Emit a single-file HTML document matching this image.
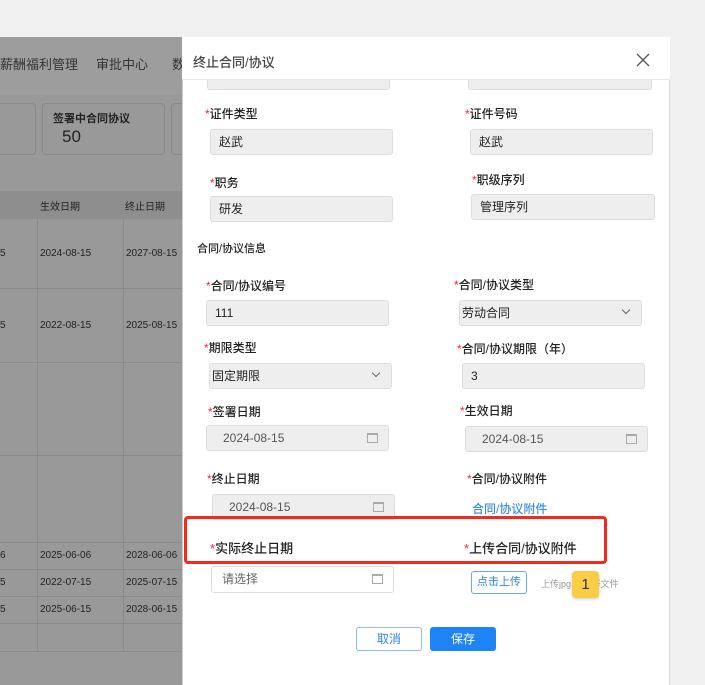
<!DOCTYPE html><html><head><meta charset="utf-8"><style>
*{box-sizing:border-box;margin:0;padding:0}
body{width:705px;height:685px;position:relative;overflow:hidden;background:#f0f0f0;font-family:"Liberation Sans","Noto Sans CJK SC",sans-serif;font-size:12px;color:#333}
.a{position:absolute}
.ov{left:0;top:37px;width:182px;height:648px;background:#999}
.lbl{position:absolute;font-size:12px;color:#222;white-space:nowrap;font-weight:500}
.lbl b{color:#f22;font-weight:normal}
.in{position:absolute;height:26px;width:183px;background:#eee;border:1px solid #ddd;border-radius:3px;padding-left:8px;line-height:24px;font-size:12px;color:#222}
.g{color:#555;padding-left:16px}
.cal{position:absolute;right:10px;top:7px;width:11px;height:10px;border:1px solid #aaa;border-top-width:2px}
.chev{position:absolute;right:12px;top:6px;width:6px;height:6px;border-right:1px solid #666;border-bottom:1px solid #666;transform:rotate(45deg)}
.t{position:absolute;font-size:11px;color:#222}
.hl{position:absolute;height:1px;background:#8a8a8a;left:0;width:182px}
.vl{position:absolute;width:1px;background:#8a8a8a}
</style></head><body>
<div class="a ov"></div>
<div class="a" style="left:0;top:37px;width:182px;height:58px;background:#9d9d9d"></div>
<div class="t" style="left:0;top:54px;font-size:13px;color:#333">薪酬福利管理</div>
<div class="t" style="left:96px;top:54px;font-size:13px;color:#333">审批中心</div>
<div class="t" style="left:172px;top:54px;font-size:13px;color:#333">数</div>
<div class="a" style="left:-10px;top:103px;width:46px;height:52px;border:1px solid #888;border-radius:4px"></div>
<div class="a" style="left:42px;top:103px;width:123px;height:52px;border:1px solid #888;border-radius:4px"></div>
<div class="a" style="left:171px;top:103px;width:20px;height:52px;border:1px solid #888;border-radius:4px"></div>
<div class="t" style="left:53px;top:110px;font-size:11px;font-weight:bold">签署中合同协议</div>
<div class="t" style="left:62px;top:127px;font-size:17px">50</div>
<div class="a" style="left:0;top:191px;width:182px;height:28px;background:#8e8e8e"></div>
<div class="t" style="left:40px;top:198px;font-size:10px">生效日期</div>
<div class="t" style="left:125px;top:198px;font-size:10px">终止日期</div>
<div class="vl" style="left:37px;top:219px;height:432px"></div>
<div class="vl" style="left:123px;top:219px;height:432px"></div>
<div class="hl" style="top:288px"></div><div class="hl" style="top:362px"></div><div class="hl" style="top:455px"></div><div class="hl" style="top:542px"></div><div class="hl" style="top:569px"></div><div class="hl" style="top:596px"></div><div class="hl" style="top:623px"></div><div class="hl" style="top:651px"></div>
<div class="t" style="left:0;top:248px;font-size:10px">5</div><div class="t" style="left:40px;top:248px;font-size:10px">2024-08-15</div><div class="t" style="left:126px;top:248px;font-size:10px">2027-08-15</div>
<div class="t" style="left:0;top:320px;font-size:10px">5</div><div class="t" style="left:40px;top:320px;font-size:10px">2022-08-15</div><div class="t" style="left:126px;top:320px;font-size:10px">2025-08-15</div>
<div class="t" style="left:0;top:550px;font-size:10px">6</div><div class="t" style="left:40px;top:550px;font-size:10px">2025-06-06</div><div class="t" style="left:126px;top:550px;font-size:10px">2028-06-06</div>
<div class="t" style="left:0;top:577px;font-size:10px">5</div><div class="t" style="left:40px;top:577px;font-size:10px">2022-07-15</div><div class="t" style="left:126px;top:577px;font-size:10px">2025-07-15</div>
<div class="t" style="left:0;top:604px;font-size:10px">5</div><div class="t" style="left:40px;top:604px;font-size:10px">2025-06-15</div><div class="t" style="left:126px;top:604px;font-size:10px">2028-06-15</div>

<div class="a" style="left:182px;top:37px;width:488px;height:648px;background:#fff;border-left:1px solid #ccc;border-right:1px solid #ddd"></div>
<div class="in" style="left:207px;top:62px;height:28px"></div>
<div class="in" style="left:468px;top:62px;height:28px;width:184px"></div>
<div class="a" style="left:182px;top:37px;width:488px;height:43px;border-bottom:1px solid #e8e8e8;background:#fff;z-index:2"></div>
<div class="lbl" style="left:193px;top:52px;font-size:13px;color:#444;z-index:3">终止合同/协议</div>
<svg class="a" style="left:636px;top:53px;z-index:3" width="14" height="14" viewBox="0 0 14 14"><path d="M1 1L13 13M13 1L1 13" stroke="#555" stroke-width="1.3"/></svg>

<div class="lbl" style="left:205px;top:105px"><b>*</b>证件类型</div>
<div class="lbl" style="left:465px;top:105px"><b>*</b>证件号码</div>
<div class="in" style="left:210px;top:129px">赵武</div>
<div class="in" style="left:470px;top:129px">赵武</div>
<div class="lbl" style="left:210px;top:174px"><b>*</b>职务</div>
<div class="lbl" style="left:472px;top:171px"><b>*</b>职级序列</div>
<div class="in" style="left:210px;top:196px">研发</div>
<div class="in" style="left:471px;top:194px;width:184px">管理序列</div>
<div class="lbl" style="left:197px;top:240px;font-size:11px">合同/协议信息</div>
<div class="lbl" style="left:206px;top:277px"><b>*</b>合同/协议编号</div>
<div class="lbl" style="left:454px;top:276px"><b>*</b>合同/协议类型</div>
<div class="in" style="left:206px;top:300px">111</div>
<div class="in" style="left:459px;top:300px;padding-left:2px">劳动合同<span class="chev"></span></div>
<div class="lbl" style="left:204px;top:339px"><b>*</b>期限类型</div>
<div class="lbl" style="left:457px;top:340px"><b>*</b>合同/协议期限（年）</div>
<div class="in" style="left:209px;top:363px;padding-left:2px">固定期限<span class="chev"></span></div>
<div class="in" style="left:462px;top:363px">3</div>
<div class="lbl" style="left:208px;top:403px"><b>*</b>签署日期</div>
<div class="lbl" style="left:460px;top:402px"><b>*</b>生效日期</div>
<div class="in g" style="left:206px;top:425px">2024-08-15<span class="cal"></span></div>
<div class="in g" style="left:465px;top:426px">2024-08-15<span class="cal"></span></div>
<div class="lbl" style="left:207px;top:470px"><b>*</b>终止日期</div>
<div class="lbl" style="left:467px;top:470px"><b>*</b>合同/协议附件</div>
<div class="in g" style="left:212px;top:494px">2024-08-15<span class="cal"></span></div>
<div class="lbl" style="left:472px;top:500px;color:#3a8ee6">合同/协议附件</div>
<div class="a" style="left:184px;top:516px;width:423px;height:48px;border:3px solid #f52a1e;border-radius:4px;z-index:4"></div>
<div class="lbl" style="left:210px;top:538px;font-size:13px"><b>*</b>实际终止日期</div>
<div class="lbl" style="left:464px;top:538px;font-size:13px"><b>*</b>上传合同/协议附件</div>
<div class="in g" style="left:211px;top:566px;height:27px;background:#fff;padding-left:10px;color:#666">请选择<span class="cal"></span></div>
<div class="a" style="left:471px;top:571px;width:56px;height:23px;border:1px solid #6aa8ef;border-radius:3px;color:#2f86e8;text-align:center;line-height:21px;font-size:11px">点击上传</div>
<div class="lbl" style="left:541px;top:577px;font-size:9px;color:#999;font-weight:normal">上传jpg、zip等文件</div>
<div class="a" style="left:572px;top:571px;width:27px;height:27px;background:#f9cd46;border-radius:4px;text-align:center;line-height:27px;font-size:15px;color:#333;box-shadow:0 1px 3px rgba(0,0,0,.2)">1</div>
<div class="a" style="left:356px;top:627px;width:66px;height:24px;border:1px solid #8dbdf2;border-radius:3px;color:#2f86e8;text-align:center;line-height:22px">取消</div>
<div class="a" style="left:430px;top:627px;width:66px;height:24px;background:#1e84f5;border-radius:3px;color:#fff;text-align:center;line-height:24px">保存</div>
</body></html>
